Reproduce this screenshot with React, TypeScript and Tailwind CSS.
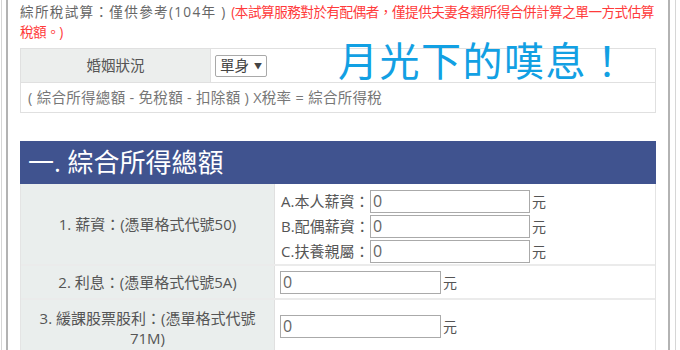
export default function App() {
  const salary = [
    { label: 'A.本人薪資：' },
    { label: 'B.配偶薪資：' },
    { label: 'C.扶養親屬：' },
  ];

  return (
    <div
      className="relative w-[680px] h-[350px] overflow-hidden bg-white text-[#555]"
      style={{ fontFamily: '"Open Sans", "Noto Sans CJK TC", sans-serif' }}
    >
      <div className="ml-[1px] w-[675px] h-[350px] border-l border-r border-[#d6d6d6]">
        <div className="ml-[4px] w-[664px] h-[350px] border-l-2 border-r-2 border-[#b3b3b3] px-[12px] pt-[2px]">
          {/* intro */}
          <p className="text-[13.6px] leading-[20px] text-[#666]">
            <span className="tracking-[1.3px]">綜所稅試算：僅供參考(104年 ) </span>
            <span className="text-[#ff3b3b] tracking-[-0.5px]">
              (本試算服務對於有配偶者，僅提供夫妻各類所得合併計算之單一方式估算稅額。)
            </span>
          </p>

          {/* marital status */}
          <div className="mt-[6px] border border-[#e0e0e0]">
            <div className="flex h-[34px] border-b border-[#e0e0e0]">
              <div className="w-[190px] bg-[#eceeed] border-r border-[#e0e0e0] flex items-center justify-center text-[14.5px]">
                婚姻狀況
              </div>
              <div className="flex items-center pl-[4px]">
                <div className="flex items-center h-[22px] px-[4px] border border-[#a9a9a9] rounded-[2px] text-[14.5px] text-[#444]">
                  單身<span className="ml-[5px] text-[8px]">▼</span>
                </div>
              </div>
            </div>
            <div className="h-[29px] flex items-center pl-[7px] text-[14.5px] tracking-[0.3px] text-[#777]">
              ( 綜合所得總額 - 免稅額 - 扣除額 ) X稅率 = 綜合所得稅
            </div>
          </div>

          {/* section header */}
          <div className="mt-[28px] h-[43px] bg-[#40538f] flex items-center pl-[8px] text-white text-[26px]">
            一. 綜合所得總額
          </div>

          <div className="border-l border-r border-[#e4e4e4]">
            {/* row 1 */}
            <div className="flex h-[82px] border-b-2 border-[#ebebeb]">
              <div className="w-[254px] bg-[#eaeeed] border-r border-[#e0e0e0] flex items-center justify-center text-[15px]">
                1. 薪資：(憑單格式代號50)
              </div>
              <div className="flex flex-col pl-[6px] pt-[5px] gap-[1px]">
                {salary.map((s) => (
                  <div key={s.label} className="flex items-center h-[24px]">
                    <span className="w-[89px] text-[15px]">{s.label}</span>
                    <div className="w-[160px] h-[23px] border border-[#aaa] flex items-center pl-[2px] text-[16px] text-[#666]">
                      0
                    </div>
                    <span className="ml-[2px] text-[14px]">元</span>
                  </div>
                ))}
              </div>
            </div>

            {/* row 2 */}
            <div className="flex h-[34px] border-b-2 border-[#ebebeb]">
              <div className="w-[254px] bg-[#eaeeed] border-r border-[#e0e0e0] flex items-center justify-center text-[15px]">
                2. 利息：(憑單格式代號5A)
              </div>
              <div className="flex items-center pl-[5px]">
                <div className="w-[161px] h-[23px] border border-[#aaa] flex items-center pl-[2px] text-[16px] text-[#666]">
                  0
                </div>
                <span className="ml-[2px] text-[14px]">元</span>
              </div>
            </div>

            {/* row 3 */}
            <div className="flex h-[58px]">
              <div className="w-[254px] bg-[#eaeeed] border-r border-[#e0e0e0] flex items-center justify-center text-center text-[15px] leading-[20px] px-[18px] pb-[2px]">
                3. 緩課股票股利：(憑單格式代號71M)
              </div>
              <div className="flex items-center pl-[5px] pb-[6px]">
                <div className="w-[161px] h-[23px] border border-[#aaa] flex items-center pl-[2px] text-[16px] text-[#666]">
                  0
                </div>
                <span className="ml-[2px] text-[14px]">元</span>
              </div>
            </div>
          </div>
        </div>
      </div>

      {/* watermark */}
      <div
        className="absolute left-[338px] top-[33px] text-[40px] leading-[52px] tracking-[1.5px] text-[#12a0e3] pointer-events-none"
        style={{ fontFamily: '"Noto Sans CJK TC", sans-serif' }}
      >
        月光下的嘆息！
      </div>
    </div>
  );
}
